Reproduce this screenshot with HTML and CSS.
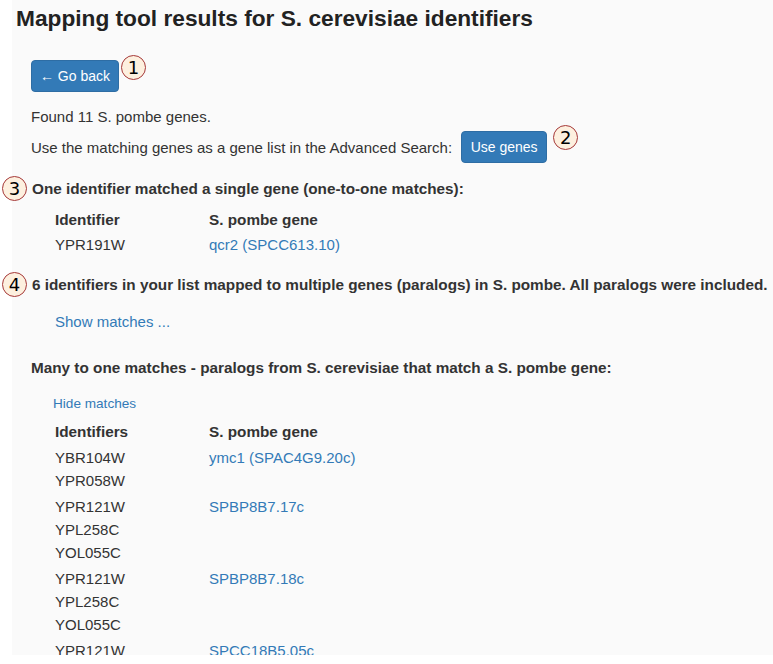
FILE: index.html
```html
<!DOCTYPE html>
<html>
<head>
<meta charset="utf-8">
<link rel="stylesheet" href="styles.css">
</head>
<body>
<div class="page">
  <h1 class="title">Mapping tool results for S. cerevisiae identifiers</h1>
  <div class="content">
    <div class="back-row">
      <button class="btn btn-back">← Go back</button>
      <span class="marker m1">1</span>
    </div>
    <p class="found">Found 11 S. pombe genes.</p>
    <div class="use-row">
      <span>Use the matching genes as a gene list in the Advanced Search:</span>
      <button class="btn btn-use">Use genes</button>
      <span class="marker m2">2</span>
    </div>
    <div class="section-head s3">
      <span class="marker">3</span>
      <span class="bold">One identifier matched a single gene (one-to-one matches):</span>
    </div>
    <div class="table one">
      <div class="th">Identifier</div><div class="th">S. pombe gene</div>
      <div class="td">YPR191W</div><div class="td"><a class="link">qcr2 (SPCC613.10)</a></div>
    </div>
    <div class="section-head s4">
      <span class="marker">4</span>
      <span class="bold">6 identifiers in your list mapped to multiple genes (paralogs) in S. pombe. All paralogs were included.</span>
    </div>
    <a class="link show">Show matches ...</a>
    <div class="bold many">Many to one matches - paralogs from S. cerevisiae that match a S. pombe gene:</div>
    <a class="link hide">Hide matches</a>
    <div class="table many-table">
      <div class="th">Identifiers</div><div class="th">S. pombe gene</div>
      <div class="td">YBR104W<br>YPR058W</div><div class="td"><a class="link">ymc1 (SPAC4G9.20c)</a></div>
      <div class="td">YPR121W<br>YPL258C<br>YOL055C</div><div class="td"><a class="link">SPBP8B7.17c</a></div>
      <div class="td">YPR121W<br>YPL258C<br>YOL055C</div><div class="td"><a class="link">SPBP8B7.18c</a></div>
      <div class="td">YPR121W<br>YPL258C<br>YOL055C</div><div class="td"><a class="link">SPCC18B5.05c</a></div>
    </div>
  </div>
</div>
</body>
</html>
```
FILE: styles.css
```css
html, body {
  margin: 0;
  padding: 0;
  background: #ffffff;
  font-family: "Liberation Sans", Arial, sans-serif;
  color: #333333;
  font-size: 15px;
}
.page {
  margin-left: 12px;
  height: 655px;
  background: #fafafa;
  overflow-x: visible;
  overflow-y: clip;
}
.title {
  margin: 0;
  padding: 4px 0 0 4px;
  font-size: 22.7px;
  font-weight: bold;
  color: #222;
  line-height: 28px;
}
.content {
  padding-left: 19px;
  padding-top: 28px;
}
.btn {
  font-family: "Liberation Sans", Arial, sans-serif;
  font-size: 14px;
  color: #fff;
  background: #337ab7;
  border: 1px solid #2e6da4;
  border-radius: 4px;
  height: 32px;
  padding: 0;
  line-height: 30px;
  white-space: nowrap;
  text-align: center;
}
.btn-back { width: 88px; }
.back-row {
  display: flex;
  align-items: flex-start;
}
.marker {
  display: inline-flex;
  align-items: center;
  justify-content: center;
  flex: none;
  box-sizing: border-box;
  width: 25px;
  height: 25px;
  border-radius: 50%;
  border: 1.5px solid #a53838;
  background: #fdf0df;
  color: #000;
  font-family: "DejaVu Sans", sans-serif;
  font-size: 18px;
  line-height: 1;
  font-weight: normal;
}
.m1 { margin-left: 2px; margin-top: -5px; }
.found { margin: 16px 0 0 0; line-height: 18px; }
.use-row {
  display: flex;
  align-items: center;
  margin-top: 5px;
}
.btn-use { margin-left: 9px; width: 86px; }
.m2 { margin-left: 6px; align-self: flex-start; margin-top: -6px; }
.section-head {
  display: flex;
  align-items: center;
  margin-left: -29px;
}
.section-head .marker { margin-right: 5px; }
.s3 { margin-top: 13px; }
.s4 { margin-top: 16px; }
.bold { font-weight: bold; font-size: 15.3px; }
.table {
  display: grid;
  grid-template-columns: 154px auto;
  justify-content: start;
  margin-left: 24px;
}
.th { font-weight: bold; font-size: 15.3px; line-height: 22px; padding-top: 8px; }
.td { line-height: 22px; padding-top: 3px; }
.link { color: #337ab7; text-decoration: none; }
.show { display: block; margin: 16px 0 0 24px; line-height: 18px; }
.many { margin-top: 28px; line-height: 18px; }
.hide { display: block; margin: 19px 0 0 22px; font-size: 13.6px; line-height: 16px; }
.many-table { margin-top: 4px; }
.many-table .th { padding-top: 4px; line-height: 23px; }
.many-table .td { line-height: 23px; }
```
